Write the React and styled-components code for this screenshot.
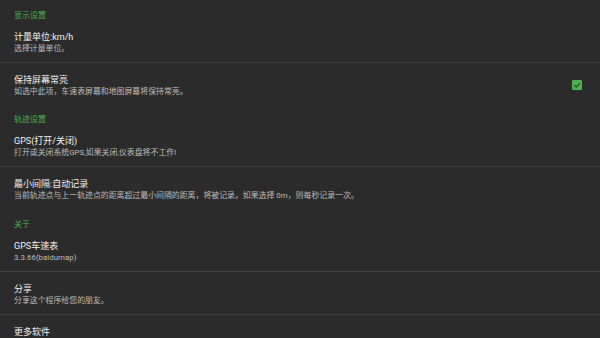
import React from "react";
import styled, { createGlobalStyle } from "styled-components";

const Global = createGlobalStyle`
  html, body {
    margin: 0;
    padding: 0;
    background: #2b2b2b;
  }
  body {
    width: 600px;
    height: 338px;
    overflow: hidden;
    font-family: Roboto, "Noto Sans CJK SC", sans-serif;
  }
`;

const Screen = styled.div`
  width: 600px;
  height: 338px;
  background: #2b2b2b;
  overflow: hidden;
  display: flex;
  flex-direction: column;
`;

const Category = styled.section`
  display: flex;
  flex-direction: column;
`;

const CategoryTitle = styled.div`
  padding: 10.5px 14px 0;
  font-size: 8px;
  line-height: 9px;
  color: #4caf50;
`;

const Item = styled.div`
  display: flex;
  align-items: center;
  padding: 11px 18px 8px 14px;
  border-bottom: ${(p) => (p.$last ? "none" : "1px solid #404040")};
`;

const Texts = styled.div`
  flex: 1;
  display: flex;
  flex-direction: column;
  min-width: 0;
`;

const Title = styled.div`
  font-size: 9px;
  line-height: 12px;
  color: #f2f2f2;
  white-space: nowrap;
`;

const Summary = styled.div`
  font-size: 7.9px;
  line-height: 11px;
  color: #bdbdbd;
  white-space: nowrap;
`;

const Check = styled.div`
  width: 10px;
  height: 10px;
  border-radius: 1px;
  background: #4caf50;
  display: flex;
  align-items: center;
  justify-content: center;
  margin-top: -1px;
`;

const CheckBox = () => (
  <Check>
    <svg width="8" height="8" viewBox="0 0 8 8">
      <path d="M1.4 4.2 L3.2 5.9 L6.6 2.4" fill="none" stroke="#263a26" strokeWidth="1.1" />
    </svg>
  </Check>
);

const data = [
  {
    title: "显示设置",
    items: [
      { t: "计量单位:km/h", s: "选择计量单位。" },
      { t: "保持屏幕常亮", s: "如选中此项，车速表屏幕和地图屏幕将保持常亮。", check: true },
    ],
  },
  {
    title: "轨迹设置",
    items: [
      { t: "GPS(打开/关闭)", s: "打开或关闭系统GPS,如果关闭,仪表盘将不工作!" },
      { t: "最小间隔:自动记录", s: "当前轨迹点与上一轨迹点的距离超过最小间隔的距离，将被记录。如果选择 0m，则每秒记录一次。" },
    ],
  },
  {
    title: "关于",
    items: [
      { t: "GPS车速表", s: "3.3.66(baidumap)" },
      { t: "分享", s: "分享这个程序给您的朋友。" },
      { t: "更多软件", s: "更多好用的软件。" },
    ],
  },
];

export default function App() {
  return (
    <>
      <Global />
      <Screen>
        {data.map((cat) => (
          <Category key={cat.title}>
            <CategoryTitle>{cat.title}</CategoryTitle>
            {cat.items.map((it, i) => (
              <Item key={it.t} $last={i === cat.items.length - 1}>
                <Texts>
                  <Title>{it.t}</Title>
                  <Summary>{it.s}</Summary>
                </Texts>
                {it.check && <CheckBox />}
              </Item>
            ))}
          </Category>
        ))}
      </Screen>
    </>
  );
}
